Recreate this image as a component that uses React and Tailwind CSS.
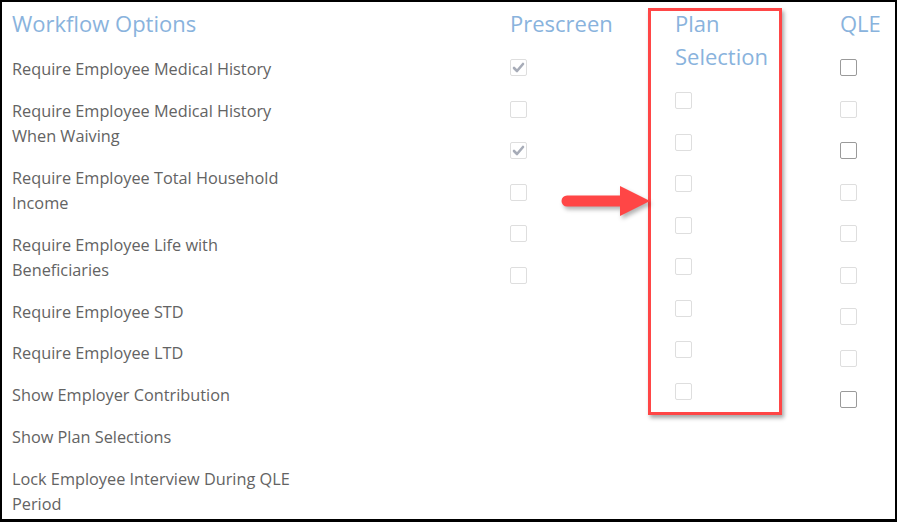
import React from "react";

const labels = [
    "Require Employee Medical History",
    "Require Employee Medical History When Waiving",
    "Require Employee Total Household Income",
    "Require Employee Life with Beneficiaries",
    "Require Employee STD",
    "Require Employee LTD",
    "Show Employer Contribution",
    "Show Plan Selections",
    "Lock Employee Interview During QLE Period",
];

// each column stacks its own boxes, they don't line up with the label rows
const prescreen = [
    { checked: true },
    {},
    { checked: true },
    {},
    {},
    {},
];
const planSelection = [{}, {}, {}, {}, {}, {}, {}, {}];
const qle = [
    { enabled: true },
    {},
    { enabled: true },
    {},
    {},
    {},
    {},
    {},
    { enabled: true },
];

const Box = ({ checked, enabled }) => (
    <div
        className={`w-[17px] h-[17px] border rounded-[2px] bg-white flex items-center justify-center ${
            enabled ? "border-[#9a9a9a]" : "border-[#dedede]"
        }`}
    >
        {checked && (
            <svg width="13" height="11" viewBox="0 0 13 11">
                <path d="M2 6 L5 9 L11 2" fill="none" stroke="#a7acb8" strokeWidth="2.6" strokeLinecap="round" strokeLinejoin="round" />
            </svg>
        )}
    </div>
);

const Column = ({ title, boxes, width }) => (
    <div className={`flex flex-col ${width}`}>
        <h2 className="text-[22px] leading-[33px] text-[#89b3dd]">{title}</h2>
        <div className="flex flex-col pt-[7px]">
            {boxes.map((b, i) => (
                <div key={i} className="h-[41.5px] flex items-center">
                    <Box {...b} />
                </div>
            ))}
        </div>
    </div>
);

const App = () => {
    return (
        <div
            className="relative w-[897px] h-[522px] bg-white border-2 border-b-[3px] border-black overflow-hidden"
            style={{ fontFamily: '"Open Sans", "Noto Sans", sans-serif' }}
        >
            <div className="flex pl-[10px] pt-[5px]">
                <div className="w-[498px] flex flex-col">
                    <h2 className="text-[22px] leading-[33px] text-[#89b3dd]">Workflow Options</h2>
                    <div className="flex flex-col gap-[16.9px] pt-[17px] w-[295px]">
                        {labels.map((l) => (
                            <p key={l} className="text-[16.3px] leading-[25px] text-[#636363]">
                                {l}
                            </p>
                        ))}
                    </div>
                </div>
                <Column title="Prescreen" boxes={prescreen} width="w-[165px]" />
                <Column title="Plan Selection" boxes={planSelection} width="w-[100px] mr-[65px]" />
                <Column title="QLE" boxes={qle} width="w-[50px]" />
            </div>

            {/* annotation overlay */}
            <div className="absolute left-[646px] top-[6px] w-[134px] h-[407px] border-[3.5px] border-[#ff4646] shadow-[2px_3px_4px_rgba(0,0,0,0.35)]" />
            <svg
                className="absolute left-[558px] top-[182px]"
                width="94"
                height="36"
                viewBox="0 0 94 36"
                style={{ filter: "drop-shadow(2px 3px 2px rgba(0,0,0,0.3))" }}
            >
                <line x1="7" y1="17" x2="64" y2="17" stroke="#ff4646" strokeWidth="11" strokeLinecap="round" />
                <polygon points="60,2 90,17 60,32" fill="#ff4646" />
            </svg>
        </div>
    );
};

export default App;
